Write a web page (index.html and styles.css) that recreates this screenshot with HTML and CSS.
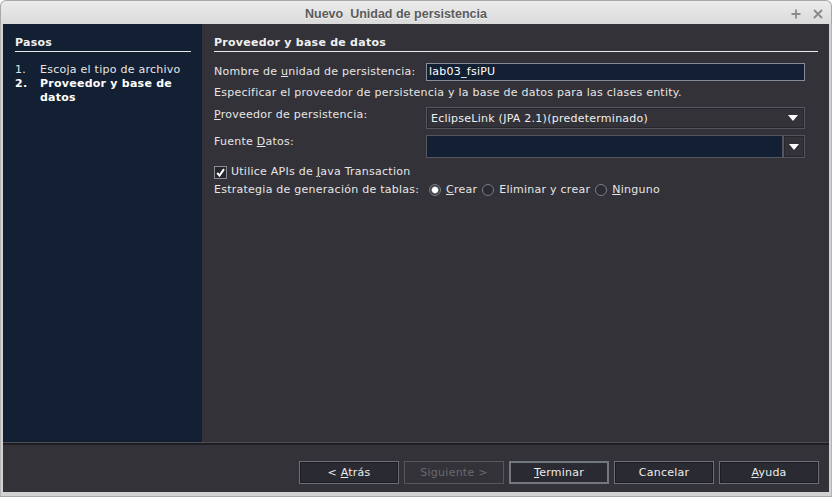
FILE: index.html
```html
<!DOCTYPE html>
<html lang="es">
<head>
<meta charset="utf-8">
<title>Nuevo Unidad de persistencia</title>
<link rel="stylesheet" href="styles.css">
</head>
<body>
<div class="window">
  <div class="titlebar">
    <span class="title">Nuevo&nbsp; Unidad de persistencia</span>
    <span class="controls">
      <svg width="10" height="10" viewBox="0 0 10 10"><path d="M5 0.5v9M0.5 5h9" stroke="#8a8a8a" stroke-width="1.8"/></svg>
      <svg width="10" height="10" viewBox="0 0 10 10"><path d="M1 1l8 8M9 1l-8 8" stroke="#8a8a8a" stroke-width="1.8"/></svg>
    </span>
  </div>
  <div class="frame">
    <div class="main">
      <aside class="steps">
        <div class="heading">Pasos</div>
        <ol class="steplist">
          <li><span class="num">1.</span><span>Escoja el tipo de archivo</span></li>
          <li class="current"><span class="num">2.</span><span>Proveedor y base de datos</span></li>
        </ol>
      </aside>
      <section class="panel">
        <div class="heading">Proveedor y base de datos</div>
        <div class="row row-name">
          <label class="label">Nombre de <u>u</u>nidad de persistencia:</label>
          <div class="textfield">lab03_fsiPU</div>
        </div>
        <p class="desc">Especificar el proveedor de persistencia y la base de datos para las clases entity.</p>
        <div class="row row-combo">
          <label class="label"><u>P</u>roveedor de persistencia:</label>
          <div class="combo">
            <span class="combo-text">EclipseLink (JPA 2.1)(predeterminado)</span>
            <span class="arrow"></span>
          </div>
        </div>
        <div class="row row-combo2">
          <label class="label label-top">Fuente <u>D</u>atos:</label>
          <div class="ecombo">
            <div class="ecombo-field"></div>
            <div class="ecombo-btn"><span class="arrow"></span></div>
          </div>
        </div>
        <div class="check-row">
          <span class="checkbox">
            <svg width="9" height="9" viewBox="0 0 9 9"><path d="M1.2 4.8l2.3 2.8L8 1.2" stroke="#ffffff" stroke-width="2" fill="none"/></svg>
          </span>
          <span>Utilice APIs de <u>J</u>ava Transaction</span>
        </div>
        <div class="row row-radio">
          <span class="label">Estrategia de generación de tablas:</span>
          <div class="radios">
            <span class="radio checked"></span><span class="rlabel"><u>C</u>rear</span>
            <span class="radio"></span><span class="rlabel">Eliminar y crear</span>
            <span class="radio"></span><span class="rlabel"><u>N</u>inguno</span>
          </div>
        </div>
      </section>
    </div>
    <div class="separator"></div>
    <div class="footer">
      <button class="btn">&lt; <u>A</u>trás</button>
      <button class="btn disabled">Siguiente &gt;</button>
      <button class="btn default"><u>T</u>erminar</button>
      <button class="btn">Cancelar</button>
      <button class="btn"><u>A</u>yuda</button>
    </div>
  </div>
</div>
</body>
</html>
```
FILE: styles.css
```css
* { box-sizing: border-box; }
html, body { margin: 0; padding: 0; }
body {
  width: 832px;
  height: 497px;
  overflow: hidden;
  background: #ffffff;
  font-family: "DejaVu Sans", sans-serif;
  font-size: 11px;
  letter-spacing: 0.25px;
  color: #e6e6e6;
}
.window {
  width: 832px;
  height: 497px;
  display: flex;
  flex-direction: column;
  background: #cfcfcf;
  border-radius: 6px 6px 0 0;
  overflow: hidden;
}
.titlebar {
  height: 24px;
  flex: none;
  position: relative;
  display: flex;
  align-items: center;
  justify-content: center;
  padding-right: 40px;
  background: linear-gradient(#ececec, #dadada);
  border: 1px solid #a9a9a9;
  border-bottom: none;
  border-radius: 6px 6px 0 0;
}
.title {
  font-family: "Liberation Sans", sans-serif;
  font-weight: bold;
  font-size: 12.5px;
  letter-spacing: 0;
  color: #5b5b5b;
  text-shadow: 0 1px 0 #f6f6f6;
  padding-top: 2px;
}
.controls {
  position: absolute;
  right: 8px;
  top: 8px;
  display: flex;
  gap: 12px;
}
.frame {
  flex: 1;
  display: flex;
  flex-direction: column;
  padding: 0 3px 4px 3px;
  background: #d2d2d2;
  border-left: 1px solid #b5b5b5;
  border-right: 1px solid #b5b5b5;
  border-bottom: 1px solid #a8a8a8;
}
.main {
  height: 418px;
  display: flex;
  margin-left: -1px;
  margin-right: -1px;
}
.steps {
  width: 199px;
  background: #131f33;
  padding: 11px 11px 0 12px;
}
.panel {
  flex: 1;
  background: #333238;
  padding: 11px 11px 0 12px;
  display: flex;
  flex-direction: column;
}
.heading {
  font-weight: bold;
  font-size: 11px;
  line-height: 15px;
  color: #f0f0f0;
  border-bottom: 1px solid #e8e8e8;
  padding-bottom: 1px;
}
.steplist {
  list-style: none;
  margin: 11px 0 0 0;
  padding: 0;
  line-height: 14px;
}
.steplist li {
  display: flex;
}
.steplist .num {
  width: 25px;
  flex: none;
}
.steplist .current { font-weight: bold; color: #ffffff; }
.row {
  display: grid;
  grid-template-columns: 212px 379px;
  align-items: center;
}
.label { line-height: 14px; color: #e6e6e6; }
.label-top { align-self: start; padding-top: 0; }
.row-name { margin-top: 11px; height: 18px; }
.textfield {
  height: 18px;
  background: #131f33;
  border: 1px solid #858b98;
  padding: 0 2px;
  line-height: 16px;
  color: #ffffff;
}
.desc {
  margin: 5px 0 0 0;
  line-height: 14px;
}
.row-combo { margin-top: 7px; align-items: start; }
.row-combo .label { padding-top: 1px; }
.combo {
  height: 22px;
  border: 1px solid #53565e;
  box-shadow: inset 0 0 0 1px #26272d;
  background: #333238;
  display: flex;
  align-items: center;
  justify-content: space-between;
  padding: 0 6px 0 4px;
  color: #f0f0f0;
}
.arrow {
  width: 0;
  height: 0;
  border-left: 5px solid transparent;
  border-right: 5px solid transparent;
  border-top: 6px solid #ffffff;
  display: block;
}
.row-combo2 { margin-top: 6px; align-items: start; }
.ecombo {
  height: 23px;
  display: flex;
}
.ecombo-field {
  flex: 1;
  background: #131f33;
  border: 1px solid #53565e;
}
.ecombo-btn {
  width: 22px;
  border: 1px solid #53565e;
  box-shadow: inset 0 0 0 1px #26272d;
  background: #333238;
  display: flex;
  align-items: center;
  justify-content: center;
}
.check-row {
  margin-top: 7px;
  display: flex;
  align-items: center;
  gap: 4px;
  line-height: 14px;
}
.checkbox {
  width: 13px;
  height: 13px;
  border: 1px solid #8a8d95;
  background: #26272d;
  display: flex;
  align-items: center;
  justify-content: center;
}
.row-radio { margin-top: 4px; grid-template-columns: 212px auto; }
.radios {
  display: flex;
  align-items: center;
  padding-left: 3px;
}
.radio {
  width: 12px;
  height: 12px;
  border-radius: 50%;
  border: 1px solid #7b7e86;
  background: #2b2c32;
  margin-right: 5px;
  position: relative;
}
.radio.checked {
  background: radial-gradient(circle, #ffffff 0 2.6px, #a9abb0 3.2px, #3a3b41 4px);
}
.rlabel { margin-right: 5px; line-height: 14px; }
.separator {
  height: 3px;
  border-top: 1px solid #4b4c52;
  background: #1d1e23;
  margin: 0 -1px;
}
.footer {
  flex: 1;
  background: #333238;
  display: flex;
  justify-content: flex-end;
  align-items: flex-start;
  gap: 5px;
  padding: 16px 10px 0 0;
  margin: 0 -1px;
}
.btn {
  width: 100px;
  height: 23px;
  font-family: "DejaVu Sans", sans-serif;
  font-size: 11px;
  letter-spacing: 0.25px;
  color: #ececec;
  background: #2a2b32;
  border: 1px solid #6c6f77;
  box-shadow: inset 0 0 0 1px #1c1d22;
  padding: 0;
}
.btn.disabled {
  color: #6a6a6e;
  background: #333238;
  border-color: #55575d;
  box-shadow: none;
}
.btn.default {
  border: 2px solid #74777e;
  box-shadow: none;
}
```
